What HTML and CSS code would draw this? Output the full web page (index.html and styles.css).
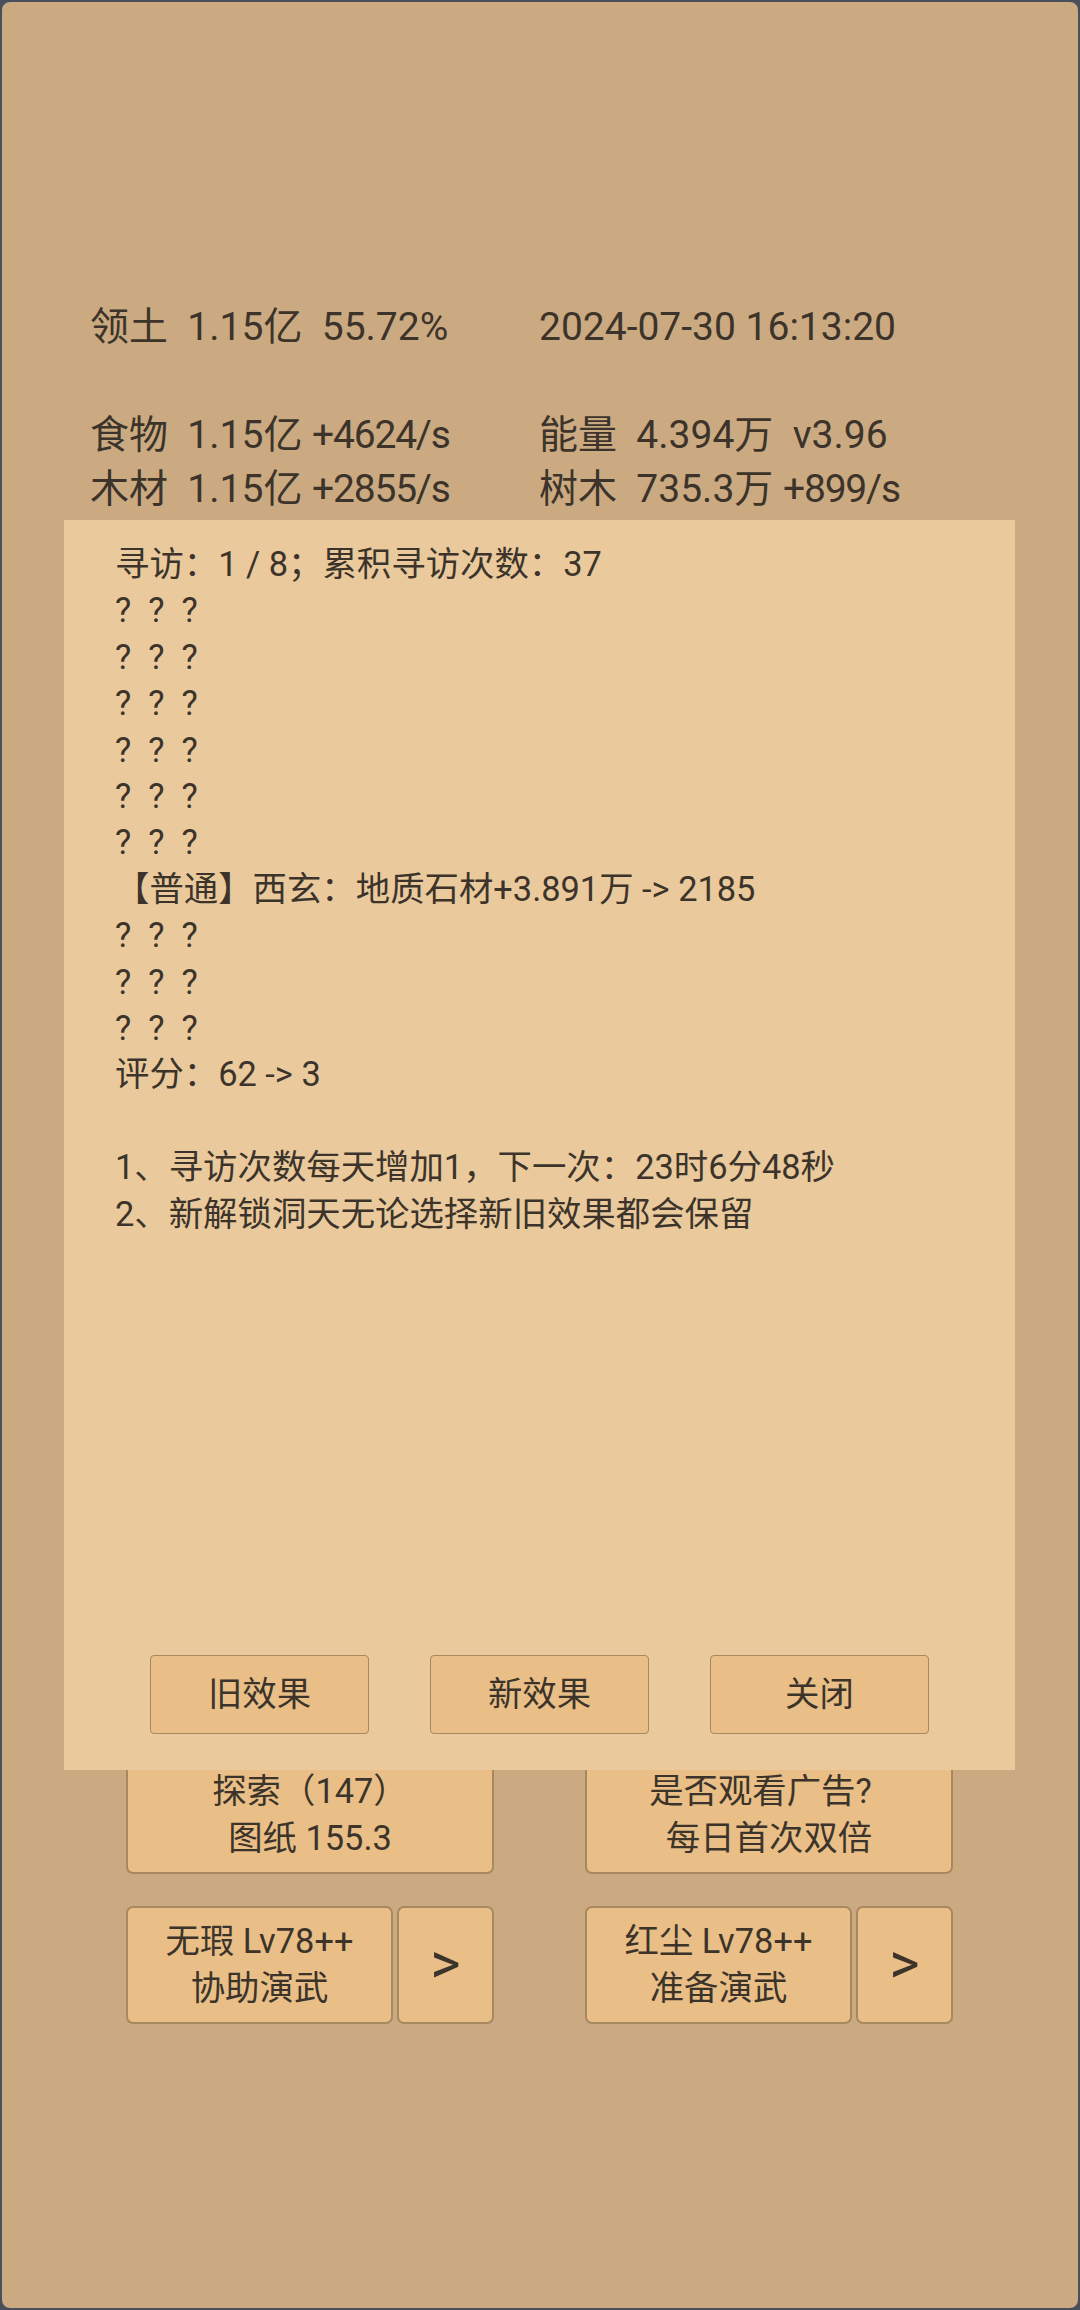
FILE: index.html
```html
<!DOCTYPE html>
<html lang="zh-CN">
<head>
<meta charset="utf-8">
<title>寻访</title>
<link rel="stylesheet" href="styles.css">
</head>
<body>
<div class="screen">
  <div class="stats">
    <div class="row"><span class="cell">领土  1.15亿  55.72%</span><span class="cell">2024-07-30 16:13:20</span></div>
    <div class="row gap-top"><span class="cell">食物  1.15亿 <span class="rate">+4624/s</span></span><span class="cell">能量  4.394万  v3.96</span></div>
    <div class="row"><span class="cell">木材  1.15亿 <span class="rate">+2855/s</span></span><span class="cell">树木  735.3万 <span class="rate">+899/s</span></span></div>
  </div>

  <div class="actions">
    <div class="act-row">
      <div class="btn wide"><span>探索（147）</span><span>图纸 155.3</span></div>
      <div class="btn wide"><span>是否观看广告?&nbsp;&nbsp;</span><span>每日首次双倍</span></div>
    </div>
    <div class="act-row">
      <div class="pair">
        <div class="btn main"><span>无瑕 Lv78++</span><span>协助演武</span></div>
        <div class="btn arrow">&gt;</div>
      </div>
      <div class="pair">
        <div class="btn main"><span>红尘 Lv78++</span><span>准备演武</span></div>
        <div class="btn arrow">&gt;</div>
      </div>
    </div>
  </div>

  <div class="dialog">
    <div class="lines">
      <div class="line">寻访：1 / 8；累积寻访次数：37</div>
      <div class="line q">? ? ?</div>
      <div class="line q">? ? ?</div>
      <div class="line q">? ? ?</div>
      <div class="line q">? ? ?</div>
      <div class="line q">? ? ?</div>
      <div class="line q">? ? ?</div>
      <div class="line">【普通】西玄：地质石材+3.891万 -&gt; 2185</div>
      <div class="line q">? ? ?</div>
      <div class="line q">? ? ?</div>
      <div class="line q">? ? ?</div>
      <div class="line">评分：62 -&gt; 3</div>
      <div class="line blank"></div>
      <div class="line">1、寻访次数每天增加1，下一次：23时6分48秒</div>
      <div class="line">2、新解锁洞天无论选择新旧效果都会保留</div>
    </div>
    <div class="dlg-buttons">
      <div class="btn dlg">旧效果</div>
      <div class="btn dlg">新效果</div>
      <div class="btn dlg">关闭</div>
    </div>
  </div>
</div>
</body>
</html>
```

FILE: styles.css
```css
* { box-sizing: border-box; }

html, body {
  margin: 0;
  padding: 0;
  background: #4b4f5c;
}

body {
  font-family: Roboto, "Noto Sans CJK SC", sans-serif;
  color: #3c342a;
}

.screen {
  position: relative;
  width: 1080px;
  height: 2310px;
  border: 2px solid #4b4f5c;
  border-radius: 10px;
  background: #cbaa82;
  display: flex;
  flex-direction: column;
  overflow: hidden;
}

/* top statistics */
.stats {
  padding-top: 298px;
  padding-left: 88px;
  font-size: 39px;
  line-height: 54.5px;
}

.row {
  display: grid;
  grid-template-columns: 449px 1fr;
  white-space: pre;
}

.rate { letter-spacing: -1.2px; }

.gap-top { margin-top: 53px; }

/* action buttons behind the dialog */
.actions {
  margin-top: auto;
  padding-left: 124px;
  padding-bottom: 284px;
  display: flex;
  flex-direction: column;
  gap: 32px;
}

.act-row {
  display: flex;
  gap: 91px;
  height: 118px;
}

.pair {
  display: flex;
  gap: 4px;
  width: 368px;
}

.btn {
  background: #e9bf87;
  border: 2px solid #a8885f;
  border-radius: 7px;
  display: flex;
  flex-direction: column;
  align-items: center;
  justify-content: center;
  font-size: 34.4px;
  line-height: 47px;
  white-space: pre;
}

.wide { width: 368px; }
.main { width: 267px; }
.arrow {
  width: 97px;
  font-size: 58px;
  line-height: 1;
  padding-bottom: 4px;
}

/* dialog overlay */
.dialog {
  position: absolute;
  left: 62px;
  top: 518px;
  width: 951px;
  height: 1250px;
  background: #eaca9d;
  display: flex;
  flex-direction: column;
  padding: 21px 0 36px 51px;
}

.lines {
  font-size: 34.4px;
  line-height: 46.4px;
}

.line { white-space: pre; }
.blank { height: 46.4px; }
.q { word-spacing: 8.5px; }

.dlg-buttons {
  margin-top: auto;
  margin-left: -51px;
  display: flex;
  justify-content: center;
  gap: 61px;
}

.dlg {
  width: 219px;
  height: 79px;
  border-width: 1.5px;
  border-radius: 4px;
}
```
